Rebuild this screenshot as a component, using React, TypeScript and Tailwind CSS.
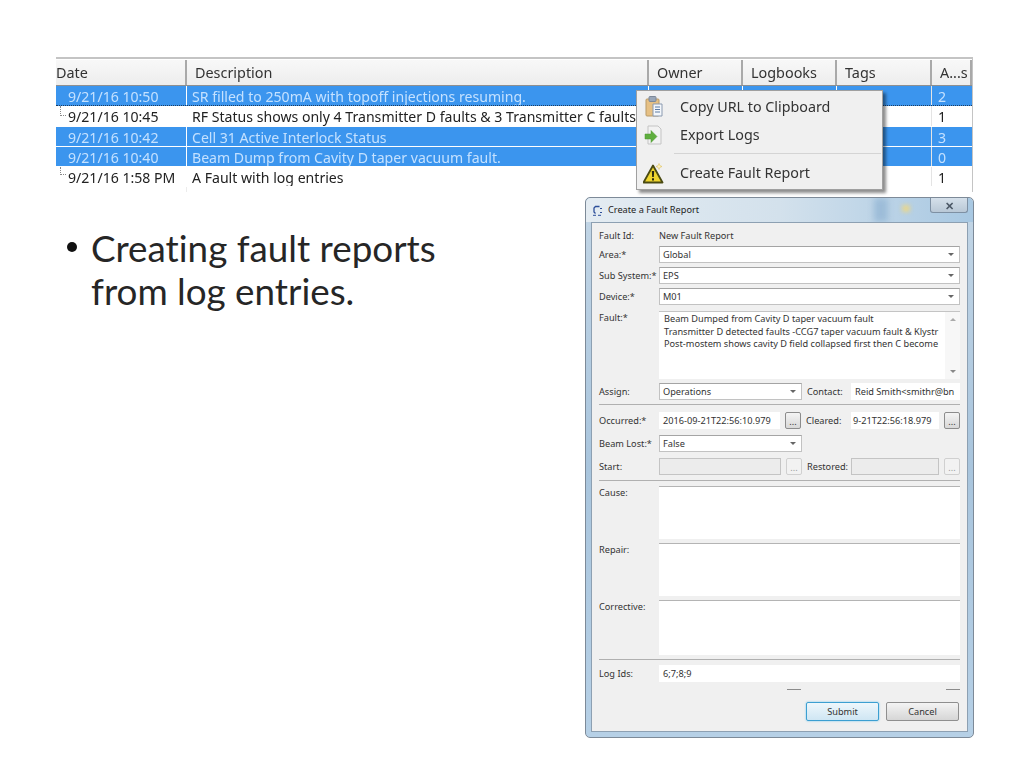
const ui = "font-['Noto_Sans','Open_Sans',sans-serif]";

const rows = [
  { date: '9/21/16 10:50', text: 'SR filled to 250mA with topoff injections resuming.', att: '2', sel: true, focus: true },
  { date: '9/21/16 10:45', text: 'RF Status shows only 4 Transmitter D faults & 3 Transmitter C faults', att: '1', sel: false, tree: 'mid' },
  { date: '9/21/16 10:42', text: 'Cell 31 Active Interlock Status', att: '3', sel: true },
  { date: '9/21/16 10:40', text: 'Beam Dump from Cavity D taper vacuum fault.', att: '0', sel: true },
  { date: '9/21/16 1:58 PM', text: 'A Fault with log entries', att: '1', sel: false, tree: 'end' },
];

function HeaderCell({ label, className }: { label: string; className: string }) {
  return (
    <div className={`flex h-[25px] items-center border-r-2 border-[#a9a9a9] bg-gradient-to-b from-[#f8f8f8] to-[#ededed] pl-2 text-[14.4px] text-[#333] ${className}`}>
      {label}
    </div>
  );
}

function LogTable() {
  return (
    <div className={`ml-[56px] w-[917px] border-t-2 border-r border-[#c4c4c4] pt-px blur-[0.35px] ${ui}`}>
      <div className="flex border-b border-[#8f8f8f]">
        <HeaderCell label="Date" className="w-[131px] !pl-0" />
        <HeaderCell label="Description" className="w-[462px]" />
        <HeaderCell label="Owner" className="w-[94px]" />
        <HeaderCell label="Logbooks" className="w-[94px]" />
        <HeaderCell label="Tags" className="w-[95px]" />
        <HeaderCell label="A...s" className="flex-1 border-r-0" />
      </div>
      {rows.map((r) => (
        <div
          key={r.date}
          className={`flex h-[20.3px] items-center border-b text-[14.1px] leading-none ${
            r.sel ? 'bg-[#3b95ee] text-[#c4e1ff]' : 'bg-white text-[#222]'
          } ${r.focus ? 'border-dotted border-[#1c3c60]' : 'border-white'}`}
        >
          <div className="relative h-full w-[131px] border-r border-white pl-3 leading-[22px]">
            {r.tree && (
              <span className={`absolute left-[4px] top-0 w-[6px] border-b border-l border-dotted border-[#888] ${r.tree === 'mid' ? 'h-[10px]' : 'h-[8px]'}`} />
            )}
            {r.date}
          </div>
          <div className={`h-full w-[462px] overflow-hidden whitespace-nowrap border-r pl-[5px] leading-[22px] ${r.sel ? 'border-white' : 'border-[#e4e4e4]'}`}>
            {r.text}
          </div>
          <div className="h-full w-[94px] border-r border-white" />
          <div className="h-full w-[94px] border-r border-white" />
          <div className="h-full w-[95px] border-r border-[#e4e4e4]" />
          <div className="h-full flex-1 pl-[6px] leading-[22px]">{r.att}</div>
        </div>
      ))}
      <div className="flex h-[5px]">
        <div className="w-[131px] border-r border-[#ececec]" />
        <div className="flex-1" />
      </div>
    </div>
  );
}

function ClipboardIcon() {
  return (
    <svg width="18" height="21" viewBox="0 0 18 21">
      <rect x="1" y="3" width="13" height="17" rx="1" fill="#e6c084" stroke="#b89a68" />
      <rect x="4" y="0.5" width="7" height="5" rx="1" fill="#9aa7b8" stroke="#7c8899" />
      <path d="M8 8h9v12H8z" fill="#f4f7fb" stroke="#8b9ab0" />
      <path d="M10 11h5M10 13.5h5M10 16h5" stroke="#5d7ca6" strokeWidth="1" />
    </svg>
  );
}

function ExportIcon() {
  return (
    <svg width="19" height="20" viewBox="0 0 19 20">
      <path d="M4 1h10l3 3v15H4z" fill="#f2f2f2" stroke="#c4c4c4" />
      <path d="M1 9h6V5.5l6 6-6 6V14H1z" fill="#5fae3e" stroke="#4c9430" strokeWidth="0.5" />
    </svg>
  );
}

function WarningIcon() {
  return (
    <svg width="21" height="21" viewBox="0 0 21 21">
      <path d="M10 2.5 19.5 19.5H.5Z" fill="#efd52e" stroke="#4a4a12" strokeWidth="1.8" strokeLinejoin="round" />
      <path d="M8.8 8h2.4l-.4 6H9.2zM9 15.2h2v2.2H9z" fill="#2a2a10" />
      <path d="M16 0.5l.9 2.1 2.1.9-2.1.9-.9 2.1-.9-2.1-2.1-.9 2.1-.9z" fill="#fff3c0" stroke="#d8b94f" strokeWidth="0.5" />
    </svg>
  );
}

function ContextMenu() {
  return (
    <div className={`absolute left-[636px] top-[90px] flex h-[100px] w-[247px] flex-col border border-[#a0a0a0] bg-[#f0f0f0] text-[14.3px] text-[#333] shadow-[3px_3px_3px_rgba(0,0,0,0.45)] blur-[0.3px] ${ui}`}>
      <div className="flex h-[29px] items-center pt-0.5">
        <span className="flex w-[43px] justify-start pl-[8px]"><ClipboardIcon /></span>
        <span>Copy URL to Clipboard</span>
      </div>
      <div className="flex h-[28px] items-center pt-0.5">
        <span className="flex w-[43px] justify-start pl-[7px]"><ExportIcon /></span>
        <span>Export Logs</span>
      </div>
      <div className="my-[5px] ml-[37px] mr-px border-t border-[#d4d4d4]" />
      <div className="flex h-[28px] items-center">
        <span className="flex w-[43px] justify-start pl-[6px]"><WarningIcon /></span>
        <span>Create Fault Report</span>
      </div>
    </div>
  );
}

function Label({ text, className = 'w-[60px]' }: { text: string; className?: string }) {
  return <div className={`shrink-0 whitespace-nowrap leading-none ${className}`}>{text}</div>;
}

function Combo({ value, className = 'flex-1' }: { value: string; className?: string }) {
  return (
    <div className={`flex h-[17px] items-center justify-between border border-[#c2c2c2] border-t-[#a4a4a4] bg-white pl-[3px] pr-[5px] ${className}`}>
      <span>{value}</span>
      <span className="h-0 w-0 border-x-[3px] border-t-[3px] border-x-transparent border-t-[#666]" />
    </div>
  );
}

function DotsButton({ disabled }: { disabled?: boolean }) {
  return (
    <div className={`ml-[5px] flex h-[17px] w-[16px] shrink-0 items-end justify-center rounded-[2px] border leading-[12px] ${disabled ? 'border-[#d0d0d0] bg-[#f2f2f2] text-[#999]' : 'border-[#8c8c8c] bg-gradient-to-b from-[#f4f4f4] to-[#d8d8d8]'}`}>
      ...
    </div>
  );
}

function TextBox({ value, className = '', disabled }: { value?: string; className?: string; disabled?: boolean }) {
  return (
    <div className={`flex h-[17px] items-center overflow-hidden whitespace-nowrap pl-[4px] ${disabled ? 'border border-[#c4c4c4] bg-[#ececec]' : 'bg-white'} ${className}`}>
      {value}
    </div>
  );
}

function BigBox({ label, className }: { label: string; className: string }) {
  return (
    <div className="flex">
      <Label text={label} className="w-[60px] pt-[2px]" />
      <div className={`flex-1 border-t border-[#b4b4b4] bg-white ${className}`} />
    </div>
  );
}

function FaultDialog() {
  return (
    <div className={`absolute left-[585px] top-[197px] flex h-[541px] w-[389px] flex-col rounded-[5px] border border-[#7d8a98] bg-gradient-to-b from-[#c3d6e6] via-[#a9c5dd] to-[#b6d0e6] px-[5px] pb-[5px] text-[9.2px] text-[#333] blur-[0.3px] ${ui}`}>
      <div className="relative -mx-[5px] flex h-[24px] shrink-0 items-center overflow-hidden rounded-t-[5px] bg-gradient-to-r from-[#e4ecf2] via-[#d3e1ec] to-[#a8c8e2] px-[5px]">
        <span className="absolute left-[288px] top-0 h-full w-[14px] bg-[#9cbcd8] blur-[3px]" />
        <span className="absolute left-[316px] top-[7px] h-[7px] w-[8px] bg-[#e6d690] blur-[2px]" />
        <svg width="11" height="11" viewBox="0 0 11 11" className="relative ml-[1px] mr-[5px]">
          <path d="M7.5 1.5H3.5L2 3v4l1.5 1.5" fill="none" stroke="#2d4f9a" strokeWidth="1.3" />
          <path d="M1 10.3h3M6 10.3h3M8 3.5h2M8 7.5h2" stroke="#2d4f9a" strokeWidth="1" />
        </svg>
        <span className="relative text-[#222]">Create a Fault Report</span>
        <div className="relative ml-auto -mt-[9px] flex h-[15px] w-[38px] items-center justify-center rounded-b-[3px] border border-t-0 border-[#7e90a3] bg-gradient-to-b from-[#d5e0ea] to-[#b9c8d6] text-[11px] font-bold leading-none text-[#4c5866]">
          ✕
        </div>
      </div>

      <div className="flex flex-1 flex-col border border-[#8da0b2] bg-[#f0f0f0] pl-[7px] pr-[7px] pt-[8px]">
        <div className="flex h-[10px] items-center">
          <Label text="Fault Id:" />
          <span>New Fault Report</span>
        </div>
        <div className="mt-[5px] flex items-center"><Label text="Area:*" /><Combo value="Global" /></div>
        <div className="mt-[4px] flex items-center"><Label text="Sub System:*" /><Combo value="EPS" /></div>
        <div className="mt-[4px] flex items-center"><Label text="Device:*" /><Combo value="M01" /></div>
        <div className="mt-[6px] flex">
          <Label text="Fault:*" className="w-[60px] pt-[2px]" />
          <div className="flex h-[68px] flex-1 border-t border-[#c4c4c4] bg-white">
            <div className="flex-1 overflow-hidden whitespace-nowrap pl-[5px] pt-[1px] leading-[12.5px]">
              <div>Beam Dumped from Cavity D taper vacuum fault</div>
              <div>Transmitter D detected faults -CCG7 taper vacuum fault &amp; Klystr</div>
              <div>Post-mostem shows cavity D field collapsed first then C become</div>
            </div>
            <div className="flex w-[15px] shrink-0 flex-col items-center justify-between bg-[#f7f7f7] py-[6px]">
              <span className="h-0 w-0 border-x-[3px] border-b-[3px] border-x-transparent border-b-[#aaa]" />
              <span className="h-0 w-0 border-x-[3px] border-t-[3px] border-x-transparent border-t-[#888]" />
            </div>
          </div>
        </div>

        <div className="mt-[4px] flex items-center">
          <Label text="Assign:" />
          <Combo value="Operations" className="w-[143px]" />
          <Label text="Contact:" className="ml-[5px] w-[44px]" />
          <TextBox value="Reid Smith<smithr@bn" className="flex-1" />
        </div>
        <div className="mt-[4px] border-t border-[#b0b0b0]" />
        <div className="mt-[7px] flex items-center">
          <Label text="Occurred:*" />
          <TextBox value="2016-09-21T22:56:10.979" className="w-[121px]" />
          <DotsButton />
          <Label text="Cleared:" className="ml-[5px] w-[45px]" />
          <TextBox value="9-21T22:56:18.979" className="flex-1 !pl-[2px]" />
          <DotsButton />
        </div>
        <div className="mt-[6px] flex items-center"><Label text="Beam Lost:*" /><Combo value="False" className="w-[143px]" /></div>
        <div className="mt-[6px] flex items-center">
          <Label text="Start:" />
          <TextBox disabled className="w-[122px]" />
          <DotsButton disabled />
          <Label text="Restored:" className="ml-[5px] w-[44px]" />
          <TextBox disabled className="flex-1" />
          <DotsButton disabled />
        </div>
        <div className="mt-[5px] border-t border-[#b0b0b0]" />
        <div className="mt-[5px]"><BigBox label="Cause:" className="h-[53px]" /></div>
        <div className="mt-[4px]"><BigBox label="Repair:" className="h-[53px]" /></div>
        <div className="mt-[4px]"><BigBox label="Corrective:" className="h-[55px]" /></div>
        <div className="mt-[4px] border-t border-[#b0b0b0]" />
        <div className="mt-[5px] flex items-center">
          <Label text="Log Ids:" />
          <TextBox value="6;7;8;9" className="flex-1" />
        </div>
        <div className="mt-[7px] flex h-px justify-end">
          <div className="mr-[145px] w-[14px] bg-[#8c8c8c]" />
          <div className="w-[14px] bg-[#8c8c8c]" />
        </div>
        <div className="mt-[12px] flex justify-end gap-[7px] pr-px">
          <div className="flex h-[19px] w-[73px] items-center justify-center rounded-[2px] border border-[#3c9fd1] bg-gradient-to-b from-[#eef7fc] to-[#cfe6f3] shadow-[0_0_2px_#63c2ee]">Submit</div>
          <div className="flex h-[19px] w-[73px] items-center justify-center rounded-[2px] border border-[#8f8f8f] bg-gradient-to-b from-[#f4f4f4] to-[#d6d6d6]">Cancel</div>
        </div>
      </div>
    </div>
  );
}

export default function App() {
  return (
    <div className="relative h-[768px] w-[1024px] overflow-hidden bg-white pt-[57px]">
      <LogTable />
      <ul className="ml-[67px] mt-[35px] w-[440px] font-['Lato',sans-serif] text-[36.8px] leading-[43px] text-[#262626] [font-variant-ligatures:none]">
        <li className="flex">
          <span className="mr-[14px] mt-[15px] h-[10px] w-[10px] shrink-0 rounded-full bg-[#111]" />
          <span>Creating fault reports from log entries.</span>
        </li>
      </ul>
      <ContextMenu />
      <FaultDialog />
    </div>
  );
}
